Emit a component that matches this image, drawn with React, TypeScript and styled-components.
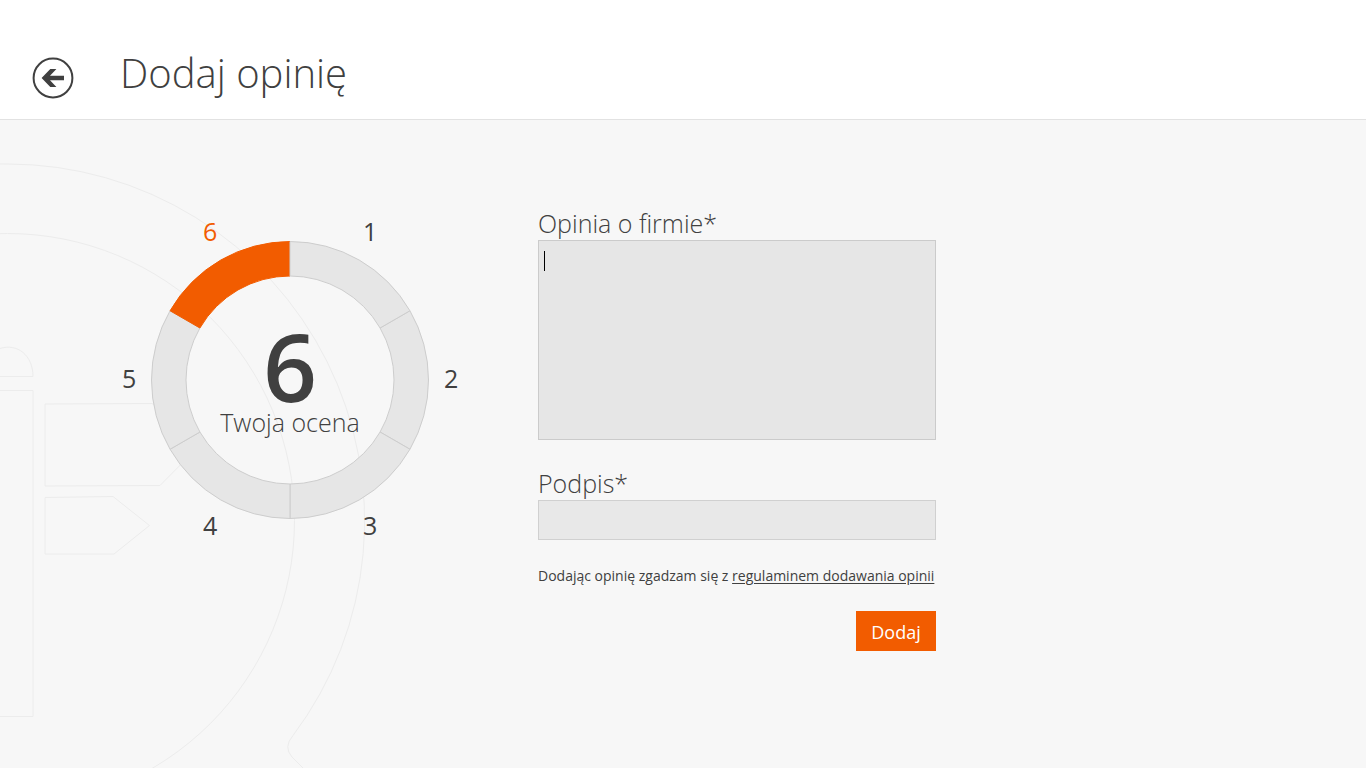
import { useState } from "react";
import styled, { createGlobalStyle } from "styled-components";

const ACCENT = "#f25c00";
const INK = "#404040";

const GlobalStyle = createGlobalStyle`
  * { box-sizing: border-box; }
  body {
    margin: 0;
    background: #f7f7f7;
    color: ${INK};
    font-family: "Open Sans", "Noto Sans", sans-serif;
  }
`;

const Page = styled.div`
  position: relative;
  display: flex;
  flex-direction: column;
  min-height: 100vh;
  overflow: hidden;
`;

const Header = styled.header`
  display: flex;
  align-items: center;
  gap: 46px;
  height: 120px;
  padding: 37px 32px 0;
  background: #fff;
  border-bottom: 1px solid #e2e2e2;
`;

const BackButton = styled.button`
  display: block;
  width: 42px;
  height: 42px;
  padding: 0;
  border: 0;
  background: none;
  color: ${INK};
  cursor: pointer;

  svg { display: block; }
`;

const Title = styled.h1`
  margin: 0 0 10px;
  font-size: 40px;
  line-height: 56px;
  font-weight: 300;
`;

const Backdrop = styled.svg`
  position: absolute;
  left: 0;
  top: 120px;
  z-index: -1;
  fill: none;
  stroke: #ececec;
`;

const Main = styled.main`
  display: flex;
  align-items: flex-start;
  gap: 80px;
  padding: 88px 32px 88px 122px;
`;

const Gauge = styled.fieldset`
  display: grid;
  grid-template-columns: 29px 278px 29px;
  grid-template-rows: 20px 278px 20px;
  align-items: center;
  margin: 0;
  padding: 13px 0 0;
  border: 0;
`;

const PairRow = styled.div`
  grid-column: 2;
  grid-row: 1;
  display: flex;
  justify-content: center;
  gap: 146px;
`;

const LowerPair = styled(PairRow)`
  grid-row: 3;
  margin-top: -8px;
`;

const SideCell = styled.div<{ $column: number }>`
  grid-column: ${(p) => p.$column};
  grid-row: 2;
  display: flex;
  justify-content: ${(p) => (p.$column === 1 ? "flex-start" : "flex-end")};
  padding-bottom: 4px;
`;

const Mark = styled.label<{ $on: boolean }>`
  position: relative;
  width: 14px;
  color: ${(p) => (p.$on ? ACCENT : INK)};
  font-size: 25px;
  line-height: 20px;
  text-align: center;
  cursor: pointer;

  input {
    position: absolute;
    inset: 0;
    margin: 0;
    opacity: 0;
    cursor: pointer;
  }
`;

const Ring = styled.svg`
  grid-column: 2;
  grid-row: 2;
  display: block;
`;

const Segment = styled.path<{ $on: boolean }>`
  fill: ${(p) => (p.$on ? ACCENT : "#e6e6e6")};
  stroke: ${(p) => (p.$on ? ACCENT : "#cdcdcd")};
  cursor: pointer;
`;

const Score = styled.output`
  grid-column: 2;
  grid-row: 2;
  display: flex;
  flex-direction: column;
  align-items: center;
  padding-top: 4px;
  pointer-events: none;
`;

const ScoreValue = styled.span`
  font-size: 94px;
  line-height: 80px;
  font-weight: 600;
`;

const ScoreCaption = styled.span`
  font-size: 25px;
  line-height: 32px;
  font-weight: 300;
`;

const Form = styled.form`
  display: flex;
  flex-direction: column;
  flex: 0 1 398px;
`;

const Field = styled.div`
  position: relative;
  display: flex;
  flex-direction: column;
  margin-bottom: 28px;
`;

const FieldLabel = styled.label`
  padding-bottom: 2px;
  font-size: 25px;
  line-height: 30px;
  font-weight: 300;
`;

const TextArea = styled.textarea`
  height: 200px;
  padding: 8px 5px;
  border: 1px solid #cbcbcb;
  border-radius: 0;
  background: #e6e6e6;
  color: ${INK};
  font: 16px/24px "Open Sans", sans-serif;
  caret-color: transparent;
  resize: none;
  outline: none;
`;

const Caret = styled.span`
  position: absolute;
  left: 6px;
  top: 43px;
  width: 1px;
  height: 20px;
  background: #000;
`;

const TextInput = styled.input`
  height: 40px;
  padding: 0 5px;
  border: 1px solid #d0d0d0;
  border-radius: 0;
  background: #e8e8e8;
  color: ${INK};
  font: 16px/24px "Open Sans", sans-serif;
  outline: none;
`;

const Terms = styled.p`
  margin: 0 0 27px;
  font-size: 14px;
  line-height: 16px;
  white-space: nowrap;

  a {
    color: inherit;
    text-underline-offset: 2px;
  }
`;

const Submit = styled.button`
  align-self: flex-end;
  width: 80px;
  height: 40px;
  padding: 2px 0 0;
  border: 0;
  background: ${ACCENT};
  color: #fff;
  font: 18px/24px "Open Sans", sans-serif;
  cursor: pointer;
`;

const C = 139;
const OUTER = 138.5;
const INNER = 104;
// The first segment is painted last so its edge closes the circle.
const SEGMENTS = [2, 3, 4, 5, 6, 1];

function point(radius: number, deg: number) {
  const a = ((deg - 90) * Math.PI) / 180;
  return `${(C + radius * Math.cos(a)).toFixed(2)} ${(C + radius * Math.sin(a)).toFixed(2)}`;
}

function segmentPath(n: number) {
  const from = (n - 1) * 60;
  const to = n * 60;
  return `M${point(OUTER, from)} A${OUTER} ${OUTER} 0 0 1 ${point(OUTER, to)} L${point(INNER, to)} A${INNER} ${INNER} 0 0 0 ${point(INNER, from)} Z`;
}

export default function App() {
  const [rating, setRating] = useState(6);
  const [opinion, setOpinion] = useState("");

  const mark = (n: number) => (
    <Mark $on={rating === n}>
      <input type="radio" name="rating" value={n} checked={rating === n} onChange={() => setRating(n)} />
      {n}
    </Mark>
  );

  return (
    <Page>
      <GlobalStyle />
      <Header>
        <BackButton type="button" aria-label="Wstecz">
          <svg width="42" height="42" viewBox="0 0 42 42">
            <circle cx="21" cy="21" r="19.4" fill="none" stroke="currentColor" strokeWidth="2" />
            <path fill="currentColor" d="M9.6 21 18.3 12H24.4L18 18.700H32V23.300H18L24.400 30H18.300Z" />
          </svg>
        </BackButton>
        <Title>Dodaj opinię</Title>
      </Header>

      <Backdrop width="400" height="648" viewBox="0 120 400 648" aria-hidden="true">
        <circle cx="7.500" cy="520.500" r="287" />
        <path d="M0 164A357 357 0 0 1 8 164A357 357 0 0 1 293 735.500Q283 747 292 757L304 769" />
        <path d="M0 348.500C17 343 33 355 33 376.500H0M0 390.500H33V716.500H0" />
        <path d="M45 404L152 403.500 205 440 160 485.500 45 486ZM45 497.500L113 496.500 149.500 525.500 114 554H45Z" />
      </Backdrop>

      <Main>
        <Gauge aria-label="Twoja ocena">
          <PairRow>
            {mark(6)}
            {mark(1)}
          </PairRow>
          <SideCell $column={1}>{mark(5)}</SideCell>
          <Ring width="278" height="278" viewBox="0 0 278 278" overflow="visible">
            {SEGMENTS.map((n) => (
              <Segment key={n} d={segmentPath(n)} $on={rating === n} onClick={() => setRating(n)} />
            ))}
          </Ring>
          <Score>
            <ScoreValue>{rating}</ScoreValue>
            <ScoreCaption>Twoja ocena</ScoreCaption>
          </Score>
          <SideCell $column={3}>{mark(2)}</SideCell>
          <LowerPair>
            {mark(4)}
            {mark(3)}
          </LowerPair>
        </Gauge>

        <Form onSubmit={(e) => e.preventDefault()}>
          <Field>
            <FieldLabel htmlFor="opinion">Opinia o firmie*</FieldLabel>
            <TextArea id="opinion" value={opinion} onChange={(e) => setOpinion(e.target.value)} />
            {opinion === "" && <Caret />}
          </Field>
          <Field>
            <FieldLabel htmlFor="signature">Podpis*</FieldLabel>
            <TextInput id="signature" type="text" />
          </Field>
          <Terms>
            Dodając opinię zgadzam się z <a href="#regulamin">regulaminem dodawania opinii</a>
          </Terms>
          <Submit type="submit">Dodaj</Submit>
        </Form>
      </Main>
    </Page>
  );
}
